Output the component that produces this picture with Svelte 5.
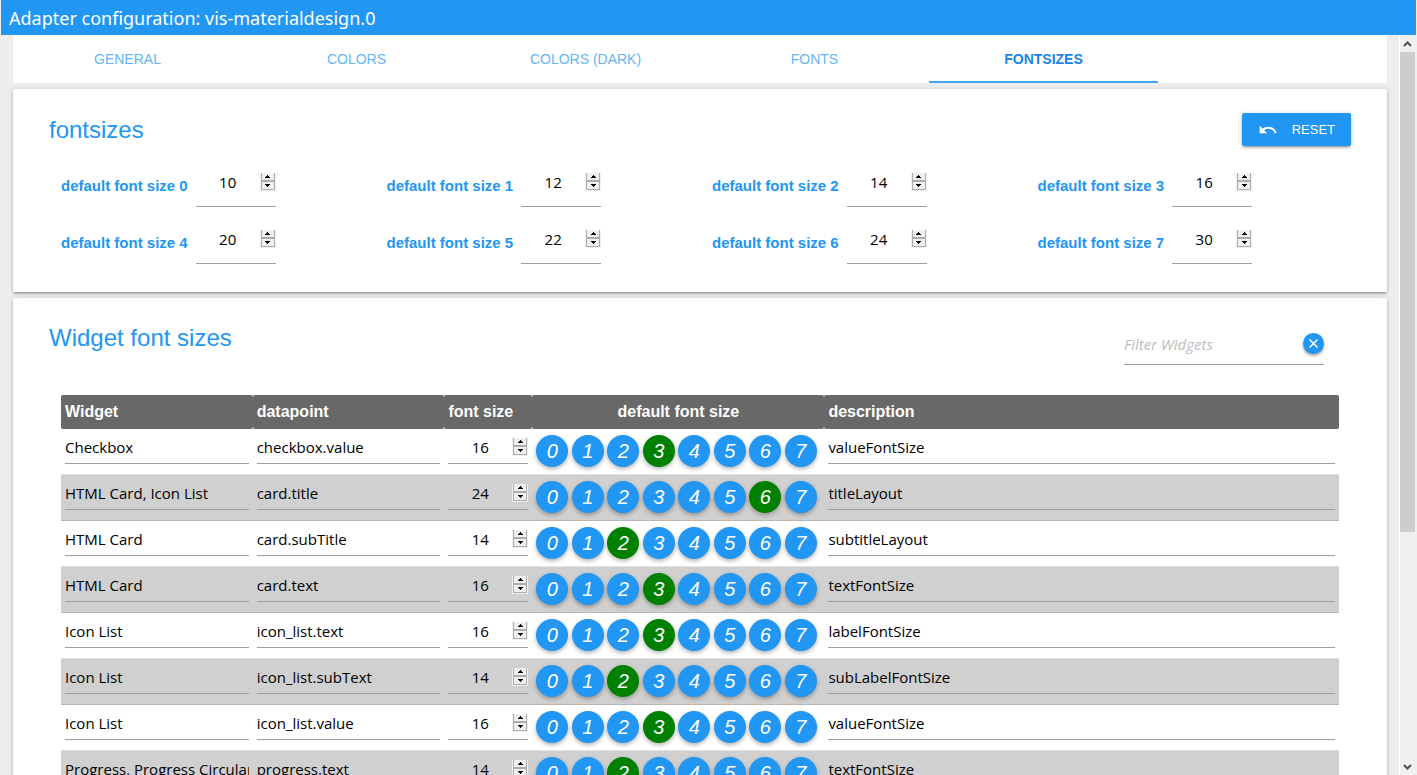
<script>
  const tabs = ['General', 'Colors', 'Colors (Dark)', 'Fonts', 'Fontsizes'];
  let active = $state(4);
  const defaults = [10, 12, 14, 16, 20, 22, 24, 30];
  let sizes = $state([...defaults]);
  let filter = $state('');
  let rows = $state([
    { widget: 'Checkbox', datapoint: 'checkbox.value', sel: 3, size: 16, desc: 'valueFontSize' },
    { widget: 'HTML Card, Icon List', datapoint: 'card.title', sel: 6, size: 24, desc: 'titleLayout' },
    { widget: 'HTML Card', datapoint: 'card.subTitle', sel: 2, size: 14, desc: 'subtitleLayout' },
    { widget: 'HTML Card', datapoint: 'card.text', sel: 3, size: 16, desc: 'textFontSize' },
    { widget: 'Icon List', datapoint: 'icon_list.text', sel: 3, size: 16, desc: 'labelFontSize' },
    { widget: 'Icon List', datapoint: 'icon_list.subText', sel: 2, size: 14, desc: 'subLabelFontSize' },
    { widget: 'Icon List', datapoint: 'icon_list.value', sel: 3, size: 16, desc: 'valueFontSize' },
    { widget: 'Progress, Progress Circular', datapoint: 'progress.text', sel: 2, size: 14, desc: 'textFontSize' }
  ]);
  const shown = $derived(rows.filter((r) => r.widget.toLowerCase().includes(filter.toLowerCase())));

  let scroller;
  const scroll = (dy) => scroller.scrollBy({ top: dy });

  function pick(row, i) {
    row.sel = i;
    row.size = sizes[i];
  }
</script>

{#snippet spinner(up, down)}
  <span class="spin">
    <button type="button" tabindex="-1" aria-label="Increase" onclick={up}>
      <svg width="5" height="3" viewBox="0 0 5 3" shape-rendering="crispEdges"><path d="M2 0h1v1h1v1h1v1H0V2h1V1h1z" /></svg>
    </button>
    <button type="button" tabindex="-1" aria-label="Decrease" onclick={down}>
      <svg width="5" height="3" viewBox="0 0 5 3" shape-rendering="crispEdges"><path d="M0 0h5v1H4v1H3v1H2V2H1V1H0z" /></svg>
    </button>
  </span>
{/snippet}

<div class="app">
  <header>Adapter configuration: vis-materialdesign.0</header>
  <div class="body">
    <main bind:this={scroller}>
      <nav>
        {#each tabs as tab, i}
          <button type="button" class="tab" class:active={active === i} onclick={() => (active = i)}>{tab}</button>
        {/each}
      </nav>

      <section class="card">
        <div class="head">
          <h2>fontsizes</h2>
          <button type="button" class="reset" onclick={() => (sizes = [...defaults])}>
            <svg width="20" height="20" viewBox="0 0 24 24"><path fill="#fff" d="M12.5 8c-2.65 0-5.05.99-6.9 2.6L2 7v9h9l-3.620-3.620c1.390-1.160 3.160-1.880 5.120-1.880 3.540 0 6.550 2.310 7.600 5.500l2.370-.780C21.080 11.030 17.150 8 12.500 8z" /></svg>
            Reset
          </button>
        </div>
        <div class="defaults">
          {#each sizes as _, i}
            <div class="field">
              <label for="size-{i}">default font size {i}</label>
              <span class="number tall">
                <input id="size-{i}" type="number" bind:value={sizes[i]} />
                {@render spinner(() => sizes[i]++, () => sizes[i]--)}
              </span>
            </div>
          {/each}
        </div>
      </section>

      <section class="card widgets">
        <div class="head">
          <h2>Widget font sizes</h2>
          <div class="filter">
            <input type="text" placeholder="Filter Widgets" aria-label="Filter Widgets" bind:value={filter} />
            <button type="button" aria-label="Clear filter" onclick={() => (filter = '')}>
              <svg width="11" height="11" viewBox="0 0 11 11"><path d="M1.500 1.500l8 8M9.500 1.500l-8 8" stroke="#fff" stroke-width="1.500" /></svg>
            </button>
          </div>
        </div>
        <table>
          <colgroup>
            <col class="c-text" /><col class="c-text" /><col class="c-size" /><col class="c-default" /><col />
          </colgroup>
          <thead>
            <tr><th>Widget</th><th>datapoint</th><th>font size</th><th class="center">default font size</th><th>description</th></tr>
          </thead>
          <tbody>
            {#each shown as row}
              <tr>
                <td><input type="text" aria-label="Widget" bind:value={row.widget} /></td>
                <td><input type="text" aria-label="datapoint" bind:value={row.datapoint} /></td>
                <td>
                  <span class="number">
                    <input type="number" aria-label="font size" bind:value={row.size} />
                    {@render spinner(() => row.size++, () => row.size--)}
                  </span>
                </td>
                <td class="picks">
                  <div>
                    {#each defaults as _, i}
                      <button type="button" class:on={row.sel === i} onclick={() => pick(row, i)}>{i}</button>
                    {/each}
                  </div>
                </td>
                <td><input type="text" aria-label="description" bind:value={row.desc} /></td>
              </tr>
            {/each}
          </tbody>
        </table>
      </section>
    </main>

    <div class="scrollbar">
      <button type="button" aria-label="Scroll up" onclick={() => scroll(-46)}>
        <svg width="9" height="6" viewBox="0 0 9 6"><path d="M1 5l3.500-3.500L8 5" /></svg>
      </button>
      <div class="track"><div class="thumb"></div></div>
      <button type="button" aria-label="Scroll down" onclick={() => scroll(46)}>
        <svg width="9" height="6" viewBox="0 0 9 6"><path d="M1 1l3.500 3.500L8 1" /></svg>
      </button>
    </div>
  </div>
</div>

<style>
  :global(body) {
    margin: 0;
    background: #eee;
  }
  .app {
    --blue: #2196f3;
    --sans: "Liberation Sans", Arial, sans-serif;
    --ui: "Segoe UI", "Open Sans", sans-serif;
    display: flex;
    flex-direction: column;
    height: 100vh;
    font-family: var(--sans);
    color: #000;
  }
  .app * {
    box-sizing: border-box;
  }
  button {
    border: 0;
    padding: 0;
    font-family: inherit;
    cursor: pointer;
  }
  header {
    flex: none;
    margin: 0 1px;
    padding: 0 8px;
    line-height: 36px;
    height: 35px;
    background: var(--blue);
    color: #fff;
    font-family: "Segoe UI", "Noto Sans", sans-serif;
    font-size: 18px;
  }
  .body {
    display: flex;
    flex: 1;
    min-height: 0;
  }
  main {
    flex: 1;
    min-width: 0;
    padding: 0 12px 0 13px;
    overflow-y: auto;
    scrollbar-width: none;
  }
  nav {
    display: grid;
    grid-template-columns: repeat(6, 1fr);
    height: 48px;
    background: #fff;
  }
  .tab {
    padding-top: 2px;
    background: none;
    border-bottom: 2px solid transparent;
    color: #64b5f6;
    font-size: 14px;
    line-height: 44px;
    text-transform: uppercase;
  }
  .tab.active {
    color: #1585e5;
    border-color: #42a5f5;
    font-weight: bold;
  }
  .card {
    margin-top: 6px;
    padding: 24px 36px 28px;
    background: #fff;
    border-radius: 2px;
    box-shadow: 0 2px 2px 0 rgba(0, 0, 0, 0.14), 0 3px 1px -2px rgba(0, 0, 0, 0.12), 0 1px 5px 0 rgba(0, 0, 0, 0.2);
  }
  .head {
    display: flex;
    justify-content: space-between;
    align-items: flex-start;
  }
  h2 {
    margin: 0;
    color: var(--blue);
    font-size: 24px;
    font-weight: normal;
    line-height: 34px;
  }
  .reset {
    display: flex;
    align-items: center;
    gap: 14px;
    height: 33px;
    padding: 0 16px;
    border-radius: 2px;
    background: var(--blue);
    color: #fff;
    font-size: 13px;
    text-transform: uppercase;
    box-shadow: 0 2px 2px 0 rgba(0, 0, 0, 0.14), 0 3px 1px -2px rgba(0, 0, 0, 0.12), 0 1px 5px 0 rgba(0, 0, 0, 0.2);
  }
  .defaults {
    display: grid;
    grid-template-columns: repeat(4, 1fr);
    row-gap: 16px;
    margin-top: 19px;
  }
  .field {
    display: flex;
    align-items: center;
    gap: 8px;
    padding-left: 12px;
  }
  .field label {
    padding-bottom: 2px;
    color: var(--blue);
    font-size: 15px;
    font-weight: bold;
    white-space: nowrap;
  }
  input {
    display: block;
    width: 100%;
    height: 31px;
    padding: 0 0 2px;
    border: 0;
    border-bottom: 1px solid #9e9e9e;
    border-radius: 0;
    outline: 0;
    background: none;
    color: #000;
    font-family: var(--ui);
    font-size: 15px;
  }
  .number {
    position: relative;
    display: block;
    width: 80px;
  }
  .number input {
    padding-right: 16px;
    text-align: center;
    appearance: textfield;
  }
  .number input::-webkit-inner-spin-button {
    appearance: none;
    margin: 0;
  }
  .tall input {
    height: 41px;
    padding-bottom: 8px;
  }
  .spin {
    position: absolute;
    top: 5px;
    right: 0;
    display: flex;
    flex-direction: column;
    width: 16px;
    height: 18px;
    padding: 0 1px 1px;
    background: #f0f0f0;
  }
  .tall .spin {
    top: 7px;
  }
  .spin button {
    display: flex;
    align-items: center;
    justify-content: center;
    flex: 1;
    border: 1px solid #adadad;
    border-top-width: 0;
    background: #f0f0f0;
  }
  .spin button + button {
    border-top-width: 1px;
  }
  .widgets {
    padding-top: 23px;
  }
  .widgets .head {
    padding-right: 27px;
  }
  .filter {
    position: relative;
    width: 200px;
    margin-top: 4px;
  }
  .filter input {
    height: 40px;
    padding: 0 24px 2px 0;
  }
  .filter input::placeholder {
    color: #bdbdbd;
    font-style: italic;
    opacity: 1;
  }
  .filter button {
    position: absolute;
    top: 8px;
    right: 0;
    display: grid;
    place-items: center;
    width: 21px;
    height: 21px;
    border-radius: 50%;
    background: var(--blue);
    box-shadow: 0 2px 3px rgba(0, 0, 0, 0.35);
  }
  table {
    width: calc(100% - 24px);
    margin: 30px 12px 0;
    border-spacing: 0;
    table-layout: fixed;
  }
  .c-text {
    width: 15%;
  }
  .c-size {
    width: 88px;
  }
  .c-default {
    width: 292px;
  }
  th {
    height: 34px;
    padding: 0 4px;
    border-radius: 2px;
    background: #686868;
    color: #fff;
    font-size: 16px;
    line-height: 34px;
    text-align: left;
  }
  .center {
    text-align: center;
  }
  tbody tr:nth-child(even) {
    background: #d0d0d0;
  }
  td {
    height: 46px;
    padding: 4px 4px 10px;
    border-bottom: 1px solid #e0e0e0;
    vertical-align: top;
  }
  tbody tr:nth-child(even) td {
    border-bottom-color: #b7b7b7;
  }
  .picks {
    padding: 6px 4px 0;
  }
  .picks div {
    display: grid;
    grid-template-columns: repeat(8, 1fr);
  }
  .picks button {
    width: 32px;
    height: 32px;
    border-radius: 50%;
    background: var(--blue);
    color: #fff;
    font-size: 20px;
    font-style: italic;
    line-height: 32px;
    box-shadow: 0 2px 4px rgba(0, 0, 0, 0.3);
  }
  .picks .on {
    background: green;
  }
  .scrollbar {
    display: flex;
    flex-direction: column;
    flex: none;
    width: 18px;
    border-left: 1px solid #fff;
    background: #f0f0f0;
  }
  .scrollbar button {
    display: grid;
    place-items: center;
    width: 15px;
    height: 17px;
    background: none;
  }
  .scrollbar path {
    fill: none;
    stroke: #505050;
    stroke-width: 2;
  }
  .track {
    flex: 1;
  }
  .thumb {
    width: 15px;
    height: 68%;
    background: #cdcdcd;
  }
</style>
